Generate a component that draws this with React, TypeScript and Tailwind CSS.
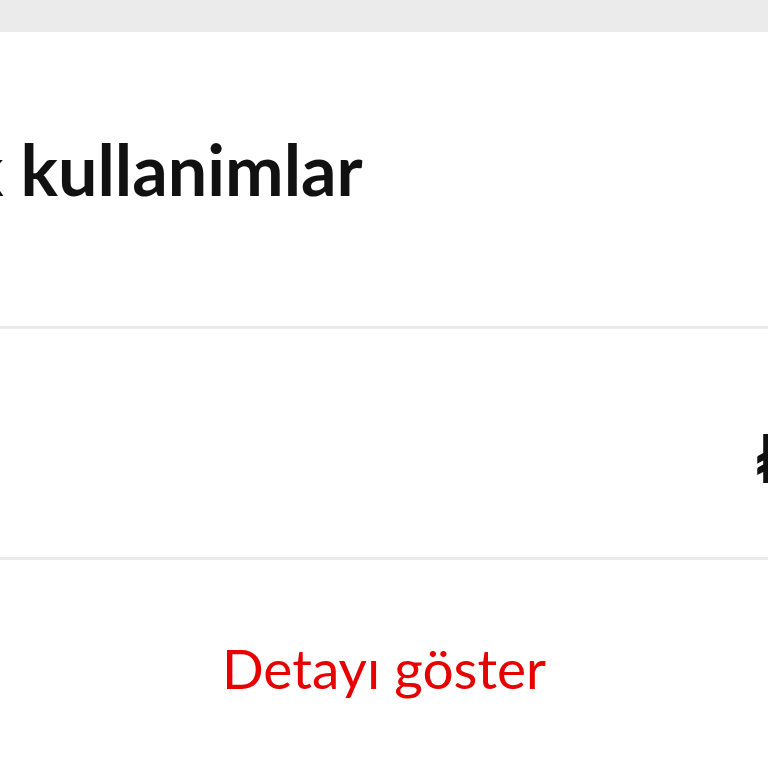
import React from "react";

export default function App() {
  const font = { fontFamily: "Lato, 'Noto Sans', sans-serif" };
  return (
    <div className="w-[768px] h-[768px] overflow-hidden bg-white flex flex-col" style={font}>
      <div className="h-[32px] bg-[#ebebeb] shrink-0" />
      <div className="h-[294px] shrink-0 flex items-start pt-[102px] whitespace-nowrap">
        <span className="ml-[-74px] text-[70px] font-bold text-[#111111] leading-none">
          Ek kullanimlar
        </span>
      </div>
      <div className="h-[3px] bg-[#ebebeb] shrink-0" />
      <div className="h-[228px] shrink-0 flex items-start justify-end pt-[96px] whitespace-nowrap">
        <span className="mr-[-200px] w-[213px] text-[66px] font-bold text-[#111111] leading-none">
          ₺29,99
        </span>
      </div>
      <div className="h-[3px] bg-[#ebebeb] shrink-0" />
      <div className="h-[208px] shrink-0 flex items-start justify-center pt-[81px]">
        <span className="text-[55px] text-[#e60000] leading-none">Detayı göster</span>
      </div>
    </div>
  );
}
